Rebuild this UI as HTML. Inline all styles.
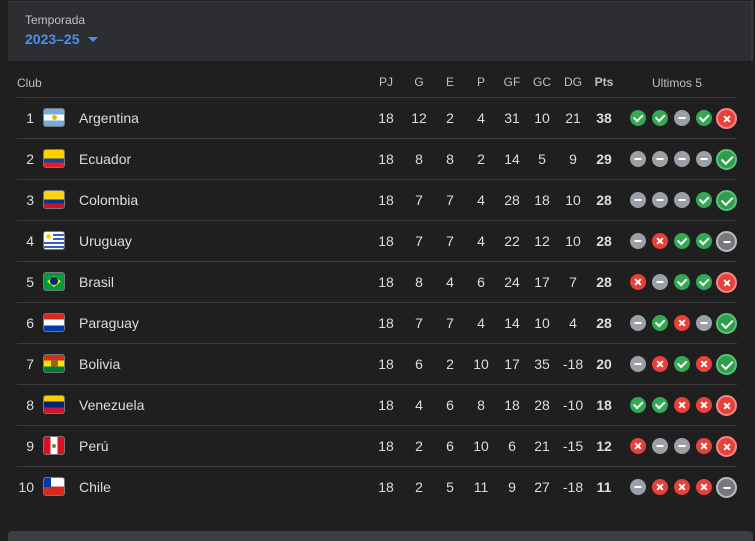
<!DOCTYPE html>
<html><head><meta charset="utf-8"><style>
*{margin:0;padding:0;box-sizing:border-box}
body{width:755px;height:537px;background:#1f1f1f;font-family:"Liberation Sans",sans-serif;color:#dcdde0;position:relative;overflow:hidden}
.top{position:absolute;left:8px;top:1px;width:745px;height:60px;background:#2d2e31;border-top:1px solid #3a3b3e;border-right:2px solid #3a3b3e}
.tl{position:absolute;left:17px;top:13px;font-size:12px;color:#bdc1c6}
.ts{position:absolute;left:17px;top:31px;font-size:14px;font-weight:bold;color:#4c8ff0}
.ts i{display:inline-block;width:0;height:0;border-left:5px solid transparent;border-right:5px solid transparent;border-top:5px solid #4c8ff0;margin-left:8px;vertical-align:2px}
.hdr{position:absolute;left:17px;top:75px;width:720px;height:23px;border-bottom:1px solid #3c3c3c;font-size:12px;color:#bdc1c6}
.row{position:absolute;left:17px;width:720px;height:41px;border-bottom:1px solid #3c3c3c;font-size:14px}
.row.last{border-bottom:none}
.c{position:absolute;top:0;line-height:40px;text-align:center;width:30px;margin-left:-15px}
.hdr .c{line-height:15px}
.rk{position:absolute;right:703px;line-height:40px}
.fl{position:absolute;left:26px;top:10px;width:22px;height:19px;border-radius:3px;overflow:hidden;border:1px solid #777}
.nm{position:absolute;left:62px;line-height:40px}
.pts{font-weight:bold}
.i{position:absolute;top:12px;width:16px;height:16px;border-radius:50%;margin-left:-8px}
.big{top:10px;width:21px;height:21px;margin-left:-10px}
.w{background:#34a853}.d{background:#9aa0a6}.l{background:#e8413a}
.big.w{background:#2e9d4c;border:2px solid #5cc27a}
.big.l{background:#e8413a;border:2px solid #f08a84}
.big.d{background:#76787c;border:2px solid #b9bcc0}
.w::after{content:"";position:absolute;left:50%;top:50%;width:7px;height:3.5px;border-left:2px solid #fff;border-bottom:2px solid #fff;transform:translate(-50%,-70%) rotate(-45deg)}
.big.w::after{width:9px;height:4.5px}
.d::after{content:"";position:absolute;left:50%;top:50%;width:7px;height:2px;background:#fff;transform:translate(-50%,-50%)}
.l::before,.l::after{content:"";position:absolute;left:50%;top:50%;width:8px;height:2px;background:#fff;transform:translate(-50%,-50%) rotate(45deg)}
.l::before{transform:translate(-50%,-50%) rotate(-45deg)}
.bot{position:absolute;left:8px;top:531px;width:745px;height:10px;background:#3c3e41;border-radius:4px 4px 0 0}
</style></head><body>
<div class="top"></div>
<div class="tl" style="left:25px">Temporada</div>
<div class="ts" style="left:25px">2023–25<i></i></div>

<div class="hdr">
<span style="position:absolute;left:0;top:1px">Club</span>
<span class="c" style="left:369px">PJ</span><span class="c" style="left:402px">G</span><span class="c" style="left:433px">E</span><span class="c" style="left:464px">P</span><span class="c" style="left:495px">GF</span><span class="c" style="left:525px">GC</span><span class="c" style="left:556px">DG</span><span class="c pts" style="left:587px">Pts</span>
<span style="position:absolute;left:635px;top:1px">Ultimos 5</span>
</div>

<div class="row" style="top:98px"><span class="rk">1</span><div class="fl" style="background:linear-gradient(#74acdf 33%,#fff 33% 67%,#74acdf 67%)"><div style="position:absolute;left:8px;top:6px;width:5px;height:5px;border-radius:50%;background:#f6b40e"></div></div><span class="nm">Argentina</span><span class="c" style="left:369px">18</span><span class="c" style="left:402px">12</span><span class="c" style="left:433px">2</span><span class="c" style="left:464px">4</span><span class="c" style="left:495px">31</span><span class="c" style="left:525px">10</span><span class="c" style="left:556px">21</span><span class="c pts" style="left:587px">38</span><span class="i w" style="left:621px"></span><span class="i w" style="left:643px"></span><span class="i d" style="left:665px"></span><span class="i w" style="left:687px"></span><span class="i big l" style="left:709px"></span></div>

<div class="row" style="top:139px"><span class="rk">2</span><div class="fl" style="background:linear-gradient(#ffd100 50%,#034ea2 50% 75%,#ed1c24 75%)"></div><span class="nm">Ecuador</span><span class="c" style="left:369px">18</span><span class="c" style="left:402px">8</span><span class="c" style="left:433px">8</span><span class="c" style="left:464px">2</span><span class="c" style="left:495px">14</span><span class="c" style="left:525px">5</span><span class="c" style="left:556px">9</span><span class="c pts" style="left:587px">29</span><span class="i d" style="left:621px"></span><span class="i d" style="left:643px"></span><span class="i d" style="left:665px"></span><span class="i d" style="left:687px"></span><span class="i big w" style="left:709px"></span></div>

<div class="row" style="top:180px"><span class="rk">3</span><div class="fl" style="background:linear-gradient(#fcd116 50%,#003893 50% 75%,#ce1126 75%)"></div><span class="nm">Colombia</span><span class="c" style="left:369px">18</span><span class="c" style="left:402px">7</span><span class="c" style="left:433px">7</span><span class="c" style="left:464px">4</span><span class="c" style="left:495px">28</span><span class="c" style="left:525px">18</span><span class="c" style="left:556px">10</span><span class="c pts" style="left:587px">28</span><span class="i d" style="left:621px"></span><span class="i d" style="left:643px"></span><span class="i d" style="left:665px"></span><span class="i w" style="left:687px"></span><span class="i big w" style="left:709px"></span></div>

<div class="row" style="top:221px"><span class="rk">4</span><div class="fl" style="background:repeating-linear-gradient(#fff 0 2px,#3d5ec7 2px 4px)"><div style="position:absolute;left:0;top:0;width:9px;height:9px;background:#fff"><div style="margin:2px;width:5px;height:5px;border-radius:50%;background:#fcd116"></div></div></div><span class="nm">Uruguay</span><span class="c" style="left:369px">18</span><span class="c" style="left:402px">7</span><span class="c" style="left:433px">7</span><span class="c" style="left:464px">4</span><span class="c" style="left:495px">22</span><span class="c" style="left:525px">12</span><span class="c" style="left:556px">10</span><span class="c pts" style="left:587px">28</span><span class="i d" style="left:621px"></span><span class="i l" style="left:643px"></span><span class="i w" style="left:665px"></span><span class="i w" style="left:687px"></span><span class="i big d" style="left:709px"></span></div>

<div class="row" style="top:262px"><span class="rk">5</span><div class="fl" style="background:#009c3b"><div style="position:absolute;left:3px;top:3px;width:14px;height:11px;background:#ffdf00;clip-path:polygon(50% 0,100% 50%,50% 100%,0 50%)"></div><div style="position:absolute;left:6px;top:4px;width:8px;height:8px;border-radius:50%;background:#002776"></div></div><span class="nm">Brasil</span><span class="c" style="left:369px">18</span><span class="c" style="left:402px">8</span><span class="c" style="left:433px">4</span><span class="c" style="left:464px">6</span><span class="c" style="left:495px">24</span><span class="c" style="left:525px">17</span><span class="c" style="left:556px">7</span><span class="c pts" style="left:587px">28</span><span class="i l" style="left:621px"></span><span class="i d" style="left:643px"></span><span class="i w" style="left:665px"></span><span class="i w" style="left:687px"></span><span class="i big l" style="left:709px"></span></div>

<div class="row" style="top:303px"><span class="rk">6</span><div class="fl" style="background:linear-gradient(#d52b1e 33%,#fff 33% 67%,#0038a8 67%)"></div><span class="nm">Paraguay</span><span class="c" style="left:369px">18</span><span class="c" style="left:402px">7</span><span class="c" style="left:433px">7</span><span class="c" style="left:464px">4</span><span class="c" style="left:495px">14</span><span class="c" style="left:525px">10</span><span class="c" style="left:556px">4</span><span class="c pts" style="left:587px">28</span><span class="i d" style="left:621px"></span><span class="i w" style="left:643px"></span><span class="i l" style="left:665px"></span><span class="i d" style="left:687px"></span><span class="i big w" style="left:709px"></span></div>

<div class="row" style="top:344px"><span class="rk">7</span><div class="fl" style="background:linear-gradient(#d52b1e 33%,#f9e300 33% 67%,#007934 67%)"><div style="position:absolute;left:7px;top:5px;width:7px;height:7px;background:#8a6a1e;border-radius:2px"></div></div><span class="nm">Bolivia</span><span class="c" style="left:369px">18</span><span class="c" style="left:402px">6</span><span class="c" style="left:433px">2</span><span class="c" style="left:464px">10</span><span class="c" style="left:495px">17</span><span class="c" style="left:525px">35</span><span class="c" style="left:556px">-18</span><span class="c pts" style="left:587px">20</span><span class="i d" style="left:621px"></span><span class="i l" style="left:643px"></span><span class="i w" style="left:665px"></span><span class="i l" style="left:687px"></span><span class="i big w" style="left:709px"></span></div>

<div class="row" style="top:385px"><span class="rk">8</span><div class="fl" style="background:linear-gradient(#ffcc00 33%,#00247d 33% 67%,#cf142b 67%)"></div><span class="nm">Venezuela</span><span class="c" style="left:369px">18</span><span class="c" style="left:402px">4</span><span class="c" style="left:433px">6</span><span class="c" style="left:464px">8</span><span class="c" style="left:495px">18</span><span class="c" style="left:525px">28</span><span class="c" style="left:556px">-10</span><span class="c pts" style="left:587px">18</span><span class="i w" style="left:621px"></span><span class="i w" style="left:643px"></span><span class="i l" style="left:665px"></span><span class="i l" style="left:687px"></span><span class="i big l" style="left:709px"></span></div>

<div class="row" style="top:426px"><span class="rk">9</span><div class="fl" style="background:linear-gradient(90deg,#d91023 33%,#fff 33% 67%,#d91023 67%)"><div style="position:absolute;left:8px;top:7px;width:4px;height:4px;background:#6a8a3a;border-radius:50%"></div></div><span class="nm">Perú</span><span class="c" style="left:369px">18</span><span class="c" style="left:402px">2</span><span class="c" style="left:433px">6</span><span class="c" style="left:464px">10</span><span class="c" style="left:495px">6</span><span class="c" style="left:525px">21</span><span class="c" style="left:556px">-15</span><span class="c pts" style="left:587px">12</span><span class="i l" style="left:621px"></span><span class="i d" style="left:643px"></span><span class="i d" style="left:665px"></span><span class="i l" style="left:687px"></span><span class="i big l" style="left:709px"></span></div>

<div class="row last" style="top:467px"><span class="rk">10</span><div class="fl" style="background:linear-gradient(#fff 50%,#d52b1e 50%)"><div style="position:absolute;left:0;top:0;width:7px;height:9px;background:#0039a6"></div></div><span class="nm">Chile</span><span class="c" style="left:369px">18</span><span class="c" style="left:402px">2</span><span class="c" style="left:433px">5</span><span class="c" style="left:464px">11</span><span class="c" style="left:495px">9</span><span class="c" style="left:525px">27</span><span class="c" style="left:556px">-18</span><span class="c pts" style="left:587px">11</span><span class="i d" style="left:621px"></span><span class="i l" style="left:643px"></span><span class="i l" style="left:665px"></span><span class="i l" style="left:687px"></span><span class="i big d" style="left:709px"></span></div>

<div class="bot"></div>
</body></html>
